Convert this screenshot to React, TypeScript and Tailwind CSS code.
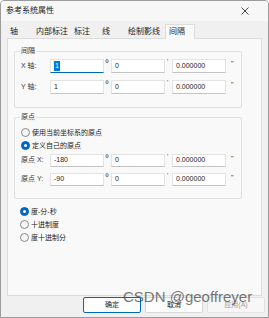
import React from 'react';

const font = "font-['Liberation_Sans','Noto_Sans_CJK_SC',sans-serif]";

const Radio = ({ checked, label }: { checked?: boolean; label: string }) => (
  <div className="flex h-[12px] items-center">
    <span
      className={`ml-[6px] flex h-[9px] w-[9px] items-center justify-center rounded-full border ${
        checked ? 'border-[#0067c0] bg-[#0067c0]' : 'border-[#8a8a8a] bg-[#f6f6f6]'
      }`}
    >
      {checked && <span className="h-[3px] w-[3px] rounded-full bg-white" />}
    </span>
    <span className="ml-[2px] text-[7px] leading-none text-[#1b1b1b]">{label}</span>
  </div>
);

const Field = ({ value, focused }: { value: string; focused?: boolean }) => (
  <div
    className={`flex h-full w-[54px] items-center border border-[#e3e3e3] bg-white pl-[3px] text-[7px] text-[#1b1b1b] ${
      focused ? 'border-b-[#0067c0]' : 'border-b-[#c4c4c4]'
    }`}
  >
    {focused ? <span className="bg-[#0078d4] px-[1px] text-white">{value}</span> : value}
  </div>
);

const Row = ({ label, vals, focused, h }: { label: string; vals: string[]; focused?: boolean; h: string }) => (
  <div className={`flex ${h} items-stretch`}>
    <div className="ml-[6px] flex w-[29px] items-center text-[7px] text-[#3a3a3a]">{label}</div>
    <Field value={vals[0]} focused={focused} />
    <div className="w-[7px] pl-[1px] text-[10px] leading-[9px] text-[#333]">°</div>
    <Field value={vals[1]} />
    <div className="w-[7px] pl-[2px] text-[7px] leading-[5px] text-[#333]">'</div>
    <Field value={vals[2]} />
    <div className="w-[15px] pl-[5px] pt-[1px] text-[7px] leading-[7px] text-[#333]">"</div>
  </div>
);

const tabs = [
  { t: '轴', w: 'w-[26px]' },
  { t: '内部标注', w: 'w-[38px]' },
  { t: '标注', w: 'w-[28px]' },
  { t: '线', w: 'w-[26px]' },
  { t: '绘制影线', w: 'w-[40px]' },
];

export default function App() {
  return (
    <div className={`relative flex h-[318px] w-[269px] flex-col overflow-hidden rounded-t-[4px] border border-[#9c9c9c] bg-[#f0f0f0] ${font}`}>
      {/* title bar */}
      <div className="flex h-[20px] shrink-0 items-center justify-between bg-[#f7f7f7] pl-[5px] pr-[19px]">
        <span className="text-[8px] text-[#1b1b1b]">参考系统属性</span>
        <svg width="8" height="8" viewBox="0 0 8 8">
          <path d="M0.5 0.5 L7.5 7.5 M7.5 0.5 L0.5 7.5" stroke="#333" strokeWidth="0.9" />
        </svg>
      </div>

      {/* tabs */}
      <div className="flex h-[17px] shrink-0 items-end pl-[6px]">
        {tabs.map((x) => (
          <div key={x.t} className={`${x.w} flex h-[13px] items-center pl-[3px] text-[8px] text-[#1b1b1b]`}>
            {x.t}
          </div>
        ))}
        <div className="relative z-10 -mb-px flex h-[15px] w-[30px] items-center border border-b-0 border-[#dcdcdc] bg-[#f9f9f9] pl-[3px] text-[8px] text-[#1b1b1b]">
          间隔
        </div>
      </div>

      {/* tab page */}
      <div className="mx-[6px] h-[258px] shrink-0 border border-[#dcdcdc] bg-[#f9f9f9] pl-[6px] pt-[7px]">
        <fieldset className="w-[228px] rounded-[2px] border border-[#e0e0e0] pb-[13px]">
          <legend className="ml-[5px] px-[1px] text-[7px] leading-[10px] text-[#3a3a3a]">间隔</legend>
          <div className="mt-[3px] flex flex-col gap-[7px]">
            <Row label="X 轴:" vals={['1', '0', '0.000000']} focused h="h-[14px]" />
            <Row label="Y 轴:" vals={['1', '0', '0.000000']} h="h-[14px]" />
          </div>
        </fieldset>

        <fieldset className="mt-[4px] w-[228px] rounded-[2px] border border-[#e0e0e0] pb-[12px]">
          <legend className="ml-[5px] px-[1px] text-[7px] leading-[10px] text-[#3a3a3a]">原点</legend>
          <div className="mt-[4px] flex flex-col gap-[1px]">
            <Radio label="使用当前坐标系的原点" />
            <Radio checked label="定义自己的原点" />
          </div>
          <div className="mt-[3px] flex flex-col gap-[6px]">
            <Row label="原点 X:" vals={['-180', '0', '0.000000']} h="h-[13px]" />
            <Row label="原点 Y:" vals={['-90', '0', '0.000000']} h="h-[13px]" />
          </div>
        </fieldset>

        <div className="mt-[6px] flex flex-col gap-[1px]">
          <Radio checked label="度-分-秒" />
          <Radio label="十进制度" />
          <Radio label="度十进制分" />
        </div>
      </div>

      {/* buttons */}
      <div className="mt-[1px] flex justify-end gap-[4px] pr-[3px]">
        <div className="flex h-[16px] w-[58px] items-center justify-center rounded-[2px] border border-[#0067c0] bg-[#fdfdfd] text-[7px] text-[#1b1b1b]">确定</div>
        <div className="flex h-[16px] w-[58px] items-center justify-center rounded-[2px] border border-[#d8d8d8] bg-[#fdfdfd] text-[7px] text-[#1b1b1b]">取消</div>
        <div className="flex h-[16px] w-[58px] items-center justify-center rounded-[2px] border border-[#e2e2e2] bg-[#f7f7f7] text-[7px] text-[#a0a0a0]">应用(A)</div>
      </div>

      {/* watermark */}
      <div className="pointer-events-none absolute left-[122px] top-[287px] font-['Liberation_Sans',sans-serif] text-[15px] leading-[18px] text-[#4a4a4a]/75">
        CSDN @geoffreyer
      </div>
    </div>
  );
}
